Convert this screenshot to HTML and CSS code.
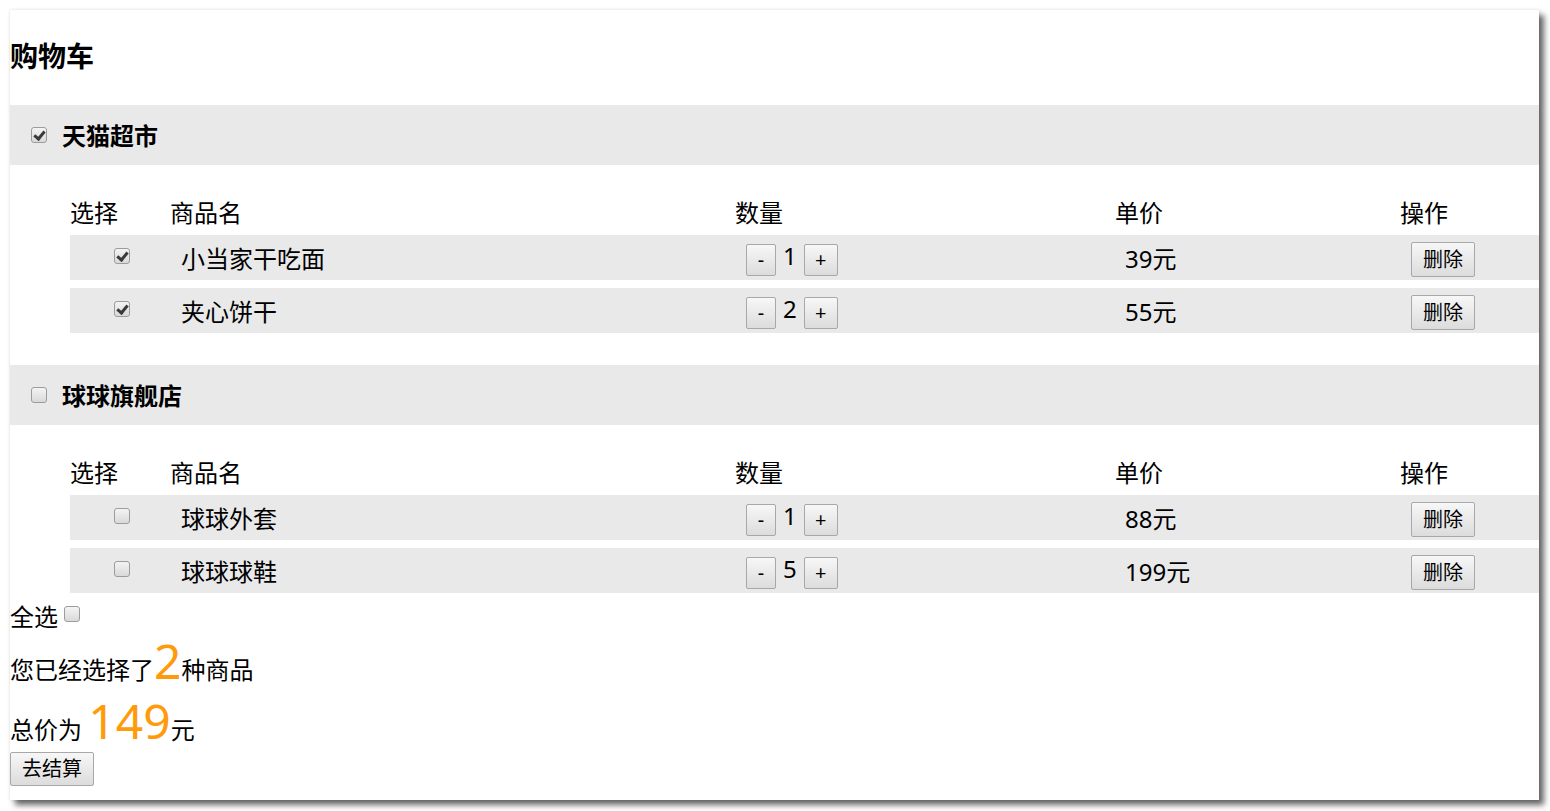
FILE: index.html
```html
<!DOCTYPE html>
<html lang="zh-CN">
<head>
<meta charset="utf-8">
<title>购物车</title>
<link rel="stylesheet" href="styles.css">
</head>
<body>
<div class="frame">
  <h2 class="title">购物车</h2>

  <section class="shop">
    <div class="shop-head"><input type="checkbox" class="cb" checked><span class="shop-name">天猫超市</span></div>
    <div class="table">
      <div class="thead"><span>选择</span><span>商品名</span><span>数量</span><span>单价</span><span>操作</span></div>
      <div class="row">
        <div class="c-sel"><input type="checkbox" class="cb" checked></div>
        <div class="c-name">小当家干吃面</div>
        <div class="c-qty"><button class="btn btn-sm">-</button><span class="num">1</span><button class="btn btn-sm btn-plus">+</button></div>
        <div class="c-price">39元</div>
        <div class="c-op"><button class="btn btn-del">删除</button></div>
      </div>
      <div class="row">
        <div class="c-sel"><input type="checkbox" class="cb" checked></div>
        <div class="c-name">夹心饼干</div>
        <div class="c-qty"><button class="btn btn-sm">-</button><span class="num">2</span><button class="btn btn-sm btn-plus">+</button></div>
        <div class="c-price">55元</div>
        <div class="c-op"><button class="btn btn-del">删除</button></div>
      </div>
    </div>
  </section>

  <section class="shop shop-second">
    <div class="shop-head"><input type="checkbox" class="cb"><span class="shop-name">球球旗舰店</span></div>
    <div class="table">
      <div class="thead"><span>选择</span><span>商品名</span><span>数量</span><span>单价</span><span>操作</span></div>
      <div class="row">
        <div class="c-sel"><input type="checkbox" class="cb"></div>
        <div class="c-name">球球外套</div>
        <div class="c-qty"><button class="btn btn-sm">-</button><span class="num">1</span><button class="btn btn-sm btn-plus">+</button></div>
        <div class="c-price">88元</div>
        <div class="c-op"><button class="btn btn-del">删除</button></div>
      </div>
      <div class="row">
        <div class="c-sel"><input type="checkbox" class="cb"></div>
        <div class="c-name">球球球鞋</div>
        <div class="c-qty"><button class="btn btn-sm">-</button><span class="num">5</span><button class="btn btn-sm btn-plus">+</button></div>
        <div class="c-price">199元</div>
        <div class="c-op"><button class="btn btn-del">删除</button></div>
      </div>
    </div>
  </section>

  <div class="all">全选 <input type="checkbox" class="cb"></div>
  <div class="summary">您已经选择了<span class="big">2</span>种商品</div>
  <div class="total">总价为 <span class="big">149</span>元</div>
  <button class="btn btn-pay">去结算</button>
</div>
</body>
</html>
```
FILE: styles.css
```css
html, body {
  margin: 0;
  padding: 0;
  background: #fff;
}
body {
  font-family: "Noto Sans", "Noto Sans CJK SC", sans-serif;
  color: #000;
  font-size: 24px;
  padding: 10px 0 0 10px;
  height: 811px;
  box-sizing: border-box;
  overflow: hidden;
}
.frame {
  width: 1529px;
  height: 790px;
  background: #fff;
  box-shadow: 5px 5px 6px rgba(0, 0, 0, 0.6), 0 0 3px rgba(0, 0, 0, 0.12);
  overflow: hidden;
}
.title {
  margin: 0;
  padding-top: 27px;
  font-size: 28px;
  line-height: 38px;
  font-weight: bold;
  height: 38px;
}
.shop-head {
  margin-top: 30px;
  height: 60px;
  background: #e9e9e9;
  display: flex;
  align-items: center;
  padding-left: 21px;
}
.shop-second .shop-head {
  margin-top: 32px;
}
.shop-name {
  margin-left: 15px;
  font-weight: bold;
  font-size: 24px;
  margin-top: -2px;
}
.cb {
  appearance: none;
  -webkit-appearance: none;
  margin: 0;
  width: 16px;
  height: 16px;
  border: 1px solid #9c9c9c;
  border-radius: 3px;
  background: linear-gradient(#f4f4f4, #d9d9d9);
  box-sizing: border-box;
  position: relative;
  display: inline-block;
  vertical-align: middle;
}
.cb:checked::after {
  content: "";
  position: absolute;
  left: 4px;
  top: 1px;
  width: 4px;
  height: 8px;
  border: solid #3a3a3a;
  border-width: 0 3px 3px 0;
  transform: rotate(40deg);
}
.table {
  margin-left: 60px;
  margin-top: 30px;
}
.thead, .row {
  display: grid;
  grid-template-columns: 100px 565px 380px 285px 1fr;
  align-items: center;
}
.thead {
  height: 36px;
  margin-bottom: 4px;
  line-height: 36px;
}
.row {
  height: 45px;
  background: #e9e9e9;
  margin-bottom: 8px;
}
.row:last-child {
  margin-bottom: 0;
}
.c-sel {
  padding-left: 44px;
  display: flex;
  align-items: center;
  margin-top: -3px;
}
.c-name, .c-qty, .c-op {
  padding-left: 11px;
}
.c-price {
  padding-left: 10px;
}
.c-qty {
  display: flex;
  align-items: center;
  margin-top: 4px;
}
.num {
  margin: -8px 7px 0 7px;
  line-height: 1;
}
.btn {
  font-family: "Noto Sans", "Noto Sans CJK SC", sans-serif;
  background: linear-gradient(#f7f7f7, #dcdcdc);
  border: 1px solid #a8a8a8;
  border-radius: 2px;
  color: #000;
  padding: 0;
  margin: 0;
  box-sizing: border-box;
}
.btn-sm {
  width: 30px;
  height: 32px;
  font-size: 20px;
  line-height: 30px;
}
.btn-plus {
  width: 34px;
}
.btn-del {
  width: 64px;
  height: 35px;
  font-size: 20px;
  line-height: 33px;
  margin-top: 4px;
  display: block;
}
.all {
  margin-top: 8px;
  line-height: 32px;
  height: 32px;
}
.all .cb {
  vertical-align: 4px;
}
.summary {
  height: 58px;
  line-height: 58px;
  margin-top: 4px;
}
.total {
  height: 55px;
  line-height: 58px;
  margin-top: 2px;
}
.big {
  color: #ff9a0a;
  font-size: 48px;
  line-height: 1;
}
.btn-pay {
  width: 84px;
  height: 34px;
  font-size: 20px;
  line-height: 32px;
  margin-top: 0;
  display: block;
}
```
